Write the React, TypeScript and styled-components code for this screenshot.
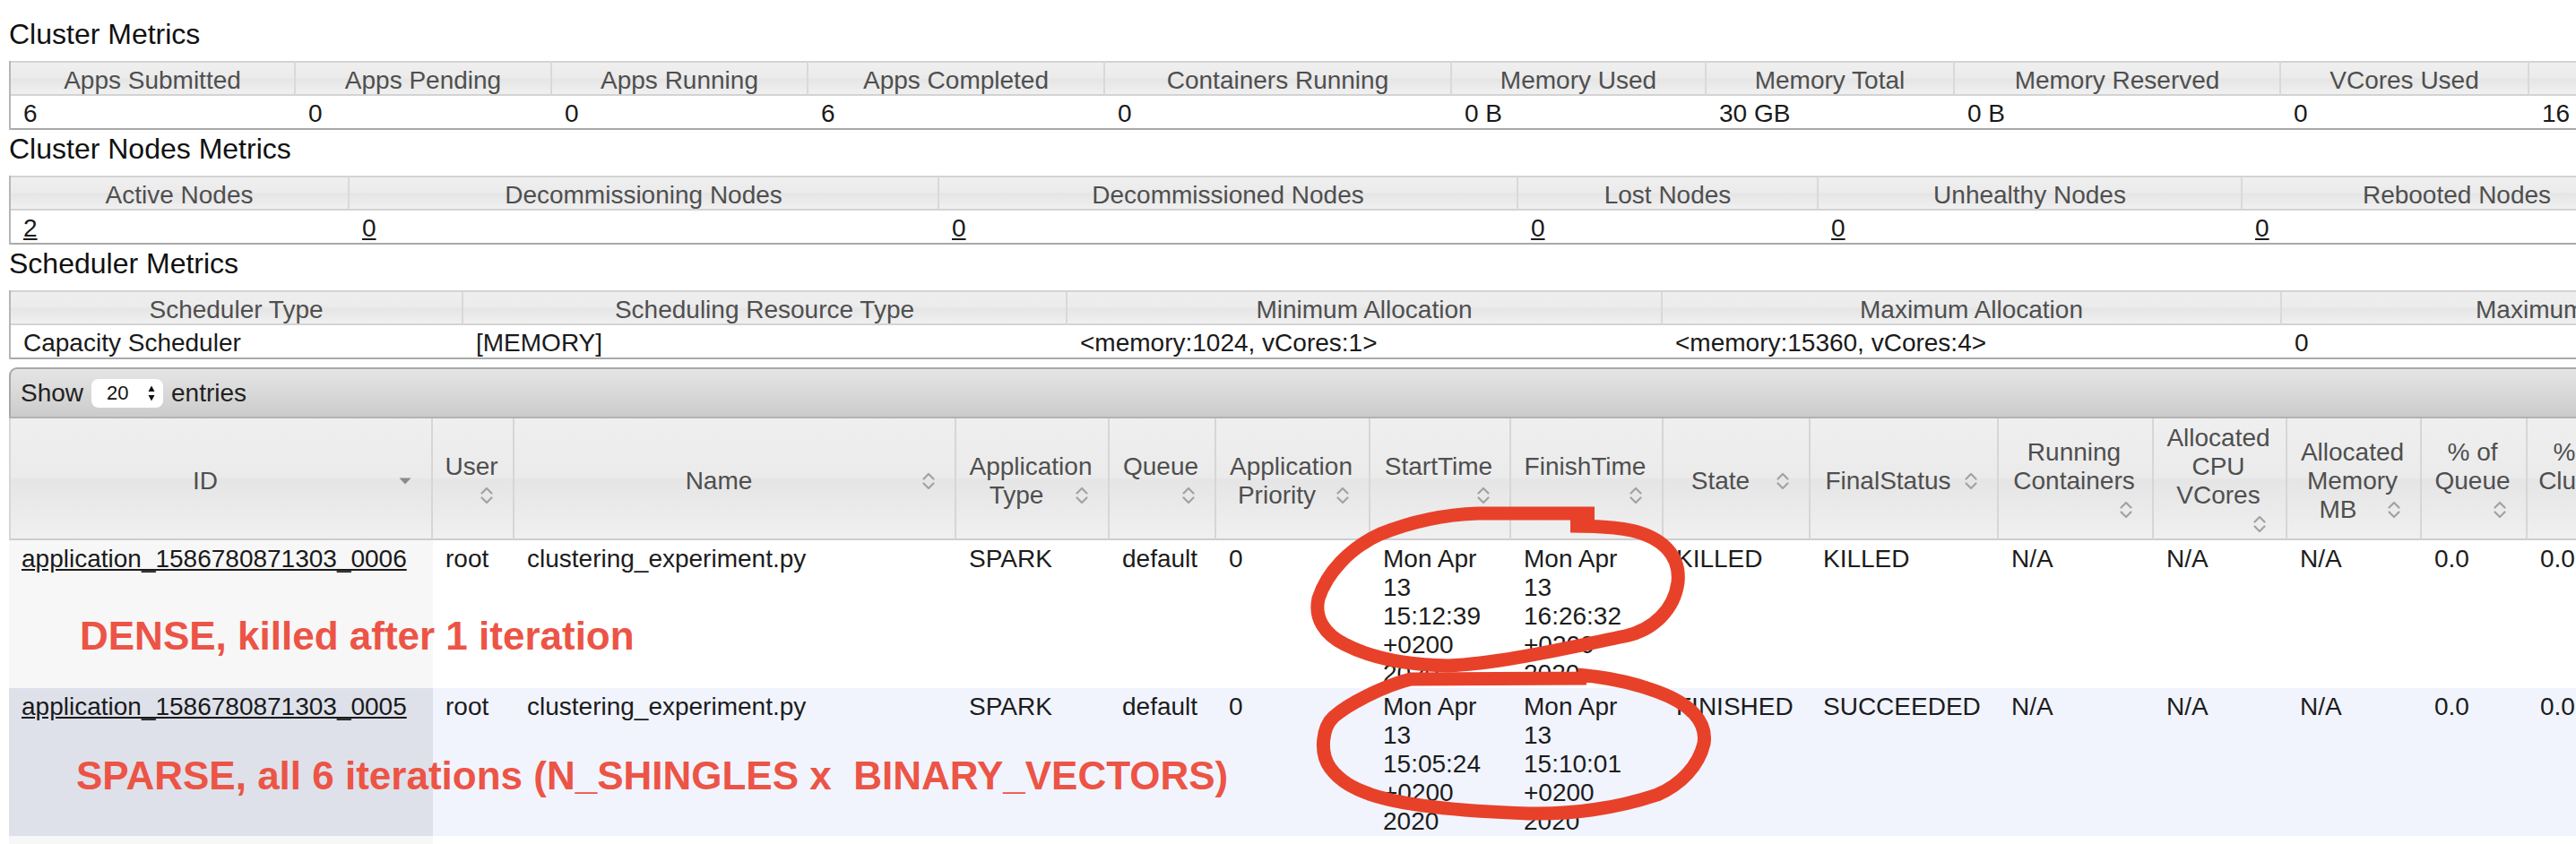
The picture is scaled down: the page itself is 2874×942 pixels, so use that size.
import React from "react";
import styled, { createGlobalStyle } from "styled-components";

const GlobalStyle = createGlobalStyle`
  html, body { margin: 0; padding: 0; background: #ffffff; overflow: hidden; }
  body { font-family: "Liberation Sans", Arial, Helvetica, sans-serif; color: #1e1e1e; }
`;

const Page = styled.div`
  position: relative;
  width: max-content;
  padding: 19px 0 0 10px;
`;

const SectionTitle = styled.h3`
  margin: 0 0 11px;
  font-size: 32px;
  line-height: 38px;
  font-weight: normal;
  color: #111111;
`;

const MetricsTable = styled.table<{ $w: number }>`
  width: ${(p) => p.$w}px;
  table-layout: fixed;
  border-collapse: separate;
  border-spacing: 0;
  border-left: 2px solid #b6b6b6;
  margin-bottom: 2px;
  font-size: 28px;
`;

const Col = styled.col<{ $w: number }>`
  width: ${(p) => p.$w}px;
`;

const headBg = `linear-gradient(to bottom, #efefef 0%, #ebebeb 49%, #e5e5e5 51%, #f0f0f0 100%)`;

const MetricTh = styled.th`
  padding: 5px 6px 0;
  line-height: 30px;
  font-weight: normal;
  color: #4f4f4f;
  text-align: center;
  white-space: nowrap;
  overflow: hidden;
  background: ${headBg};
  border-top: 2px solid #d3d3d3;
  border-bottom: 2px solid #d3d3d3;
  border-right: 2px solid #d9d9d9;
`;

const MetricTd = styled.td`
  padding: 4px 0 0 14px;
  line-height: 32px;
  white-space: nowrap;
  overflow: hidden;
  color: #1a1a1a;
  border-bottom: 2px solid #a9a9a9;
`;

const Link = styled.a`
  color: #1a1a1a;
  text-decoration: underline;
`;

const DataWrap = styled.div`
  margin-top: 9px;
  width: max-content;
`;

const Toolbar = styled.div`
  display: flex;
  align-items: center;
  gap: 9px;
  height: 53px;
  padding-left: 11px;
  border-top: 2px solid #a8a8a8;
  border-left: 2px solid #a8a8a8;
  border-bottom: 2px solid #b3b3b3;
  border-top-left-radius: 9px;
  background: linear-gradient(to bottom, #e5e5e5 0%, #d6d6d6 60%, #cbcbcb 100%);
  font-size: 28px;
  line-height: 32px;
  color: #222222;
`;

const FakeSelect = styled.span`
  display: flex;
  align-items: center;
  justify-content: space-between;
  box-sizing: border-box;
  width: 80px;
  height: 32px;
  padding: 0 9px 0 17px;
  background: #ffffff;
  border-radius: 8px;
  font-size: 22px;
  color: #111;
`;

const DataTable = styled.table<{ $w: number }>`
  width: ${(p) => p.$w}px;
  table-layout: fixed;
  border-collapse: separate;
  border-spacing: 0;
  font-size: 28px;
`;

const DTh = styled.th<{ $first?: boolean }>`
  padding: 6px 13px 0 10px;
  line-height: 32px;
  font-weight: normal;
  color: #4f4f4f;
  text-align: center;
  vertical-align: middle;
  background: ${headBg};
  border-bottom: 2px solid #cdcdcd;
  border-right: 2px solid #d6d6d6;
  border-left: ${(p) => (p.$first ? "2px solid #d6d6d6" : "none")};
  overflow: hidden;
`;

const IconBox = styled.span`
  float: right;
  width: 32px;
  height: 32px;
  display: flex;
  align-items: center;
  justify-content: center;
`;

const Row = styled.tr<{ $alt: boolean }>`
  background: ${(p) => (p.$alt ? "#f1f4fd" : "#ffffff")};
`;

const DTd = styled.td<{ $sorted?: boolean; $alt?: boolean }>`
  padding: 5px 16px 0 14px;
  line-height: 32px;
  vertical-align: top;
  color: #1c1c1c;
  white-space: nowrap;
  overflow: hidden;
  background: ${(p) => (p.$sorted ? (p.$alt ? "#dee1ea" : "#f7f7f7") : "transparent")};
`;

const Overlay = styled.svg`
  position: absolute;
  top: 0;
  left: 0;
  pointer-events: none;
`;

const Annotation = styled.div<{ $top: number; $left: number }>`
  position: absolute;
  top: ${(p) => p.$top}px;
  left: ${(p) => p.$left}px;
  font-size: 44px;
  line-height: 44px;
  font-weight: bold;
  color: #ec5446;
  white-space: pre;
`;

type Cell = string | { link: string };

const clusterMetrics = {
  cols: [318, 286, 286, 331, 387, 284, 277, 364, 277, 277, 364],
  heads: [
    "Apps Submitted",
    "Apps Pending",
    "Apps Running",
    "Apps Completed",
    "Containers Running",
    "Memory Used",
    "Memory Total",
    "Memory Reserved",
    "VCores Used",
    "VCores Total",
    "VCores Reserved",
  ],
  values: ["6", "0", "0", "6", "0", "0 B", "30 GB", "0 B", "0", "16", "0"] as Cell[],
};

const nodeMetrics = {
  cols: [378, 658, 646, 335, 473, 480, 480],
  heads: [
    "Active Nodes",
    "Decommissioning Nodes",
    "Decommissioned Nodes",
    "Lost Nodes",
    "Unhealthy Nodes",
    "Rebooted Nodes",
    "Shutdown Nodes",
  ],
  values: ["2", "0", "0", "0", "0", "0", "0"].map((v) => ({ link: v })) as Cell[],
};

const schedulerMetrics = {
  cols: [505, 674, 664, 691, 890],
  heads: [
    "Scheduler Type",
    "Scheduling Resource Type",
    "Minimum Allocation",
    "Maximum Allocation",
    "Maximum Cluster Application Priority",
  ],
  values: [
    "Capacity Scheduler",
    "[MEMORY]",
    "<memory:1024, vCores:1>",
    "<memory:15360, vCores:4>",
    "0",
  ] as Cell[],
};

type HeadDef = { lines: string[]; w: number; own?: boolean; desc?: boolean };

const appHeads: HeadDef[] = [
  { lines: ["ID"], w: 473, desc: true },
  { lines: ["User"], w: 91, own: true },
  { lines: ["Name"], w: 493 },
  { lines: ["Application", "Type"], w: 171 },
  { lines: ["Queue"], w: 119, own: true },
  { lines: ["Application", "Priority"], w: 172 },
  { lines: ["StartTime"], w: 157, own: true },
  { lines: ["FinishTime"], w: 170, own: true },
  { lines: ["State"], w: 164 },
  { lines: ["FinalStatus"], w: 210 },
  { lines: ["Running", "Containers"], w: 173, own: true },
  { lines: ["Allocated", "CPU", "VCores"], w: 149, own: true },
  { lines: ["Allocated", "Memory", "MB"], w: 150 },
  { lines: ["% of", "Queue"], w: 118, own: true },
  { lines: ["% of", "Cluster"], w: 118, own: true },
  { lines: ["Progress"], w: 200 },
  { lines: ["Tracking UI"], w: 200 },
];

type App = {
  id: string;
  start: string;
  finish: string;
  state: string;
  final: string;
};

const apps: App[] = [
  {
    id: "application_1586780871303_0006",
    start: "Mon Apr|13|15:12:39|+0200|2020",
    finish: "Mon Apr|13|16:26:32|+0200|2020",
    state: "KILLED",
    final: "KILLED",
  },
  {
    id: "application_1586780871303_0005",
    start: "Mon Apr|13|15:05:24|+0200|2020",
    finish: "Mon Apr|13|15:10:01|+0200|2020",
    state: "FINISHED",
    final: "SUCCEEDED",
  },
  {
    id: "application_1586780871303_0004",
    start: "Mon Apr|13|14:52:10|+0200|2020",
    finish: "Mon Apr|13|15:01:47|+0200|2020",
    state: "FINISHED",
    final: "SUCCEEDED",
  },
];

const sum = (a: number[]) => a.reduce((s, v) => s + v, 0);

function Metrics({ data }: { data: { cols: number[]; heads: string[]; values: Cell[] } }) {
  return (
    <MetricsTable $w={sum(data.cols) + 2}>
      <colgroup>
        {data.cols.map((w, i) => (
          <Col key={i} $w={w} />
        ))}
      </colgroup>
      <thead>
        <tr>
          {data.heads.map((h) => (
            <MetricTh key={h}>{h}</MetricTh>
          ))}
        </tr>
      </thead>
      <tbody>
        <tr>
          {data.values.map((v, i) => (
            <MetricTd key={i}>{typeof v === "string" ? v : <Link href="#">{v.link}</Link>}</MetricTd>
          ))}
        </tr>
      </tbody>
    </MetricsTable>
  );
}

function SortGlyph({ desc }: { desc?: boolean }) {
  if (desc) {
    return (
      <svg width="14" height="8" viewBox="0 0 14 8">
        <path d="M0.5 0.5 H13.5 L7 7.5 Z" fill="#8a8a8a" />
      </svg>
    );
  }
  return (
    <svg width="16" height="20" viewBox="0 0 16 20" fill="none" stroke="#a2a2a2" strokeWidth="2.2" strokeLinecap="round" strokeLinejoin="round">
      <path d="M2.5 7.5 L8 2 L13.5 7.5" />
      <path d="M2.5 12.5 L8 18 L13.5 12.5" />
    </svg>
  );
}

function Lines({ text }: { text: string }) {
  const parts = text.split("|");
  return (
    <>
      {parts.map((p, i) => (
        <React.Fragment key={i}>
          {i > 0 && <br />}
          {p}
        </React.Fragment>
      ))}
    </>
  );
}

function AppsTable() {
  const widths = appHeads.map((h) => h.w);
  return (
    <DataWrap>
      <Toolbar>
        <span>Show</span>
        <FakeSelect>
          <span>20</span>
          <svg width="8" height="20" viewBox="0 0 8 20">
            <path d="M0.5 8 L4 1.5 L7.5 8 Z" fill="#111" />
            <path d="M0.5 12 L4 18.5 L7.5 12 Z" fill="#111" />
          </svg>
        </FakeSelect>
        <span>entries</span>
      </Toolbar>
      <DataTable $w={sum(widths)}>
        <colgroup>
          {widths.map((w, i) => (
            <Col key={i} $w={w} />
          ))}
        </colgroup>
        <thead>
          <tr>
            {appHeads.map((h, i) => (
              <DTh key={i} $first={i === 0}>
                {h.lines.map((l, j) => (
                  <React.Fragment key={j}>
                    {j > 0 && <br />}
                    {l}
                  </React.Fragment>
                ))}
                {h.own && <br />}
                <IconBox>
                  <SortGlyph desc={h.desc} />
                </IconBox>
              </DTh>
            ))}
          </tr>
        </thead>
        <tbody>
          {apps.map((a, i) => {
            const alt = i % 2 === 1;
            return (
              <Row key={a.id} $alt={alt}>
                <DTd $sorted $alt={alt}>
                  <Link href="#">{a.id}</Link>
                </DTd>
                <DTd>root</DTd>
                <DTd>clustering_experiment.py</DTd>
                <DTd>SPARK</DTd>
                <DTd>default</DTd>
                <DTd>0</DTd>
                <DTd>
                  <Lines text={a.start} />
                </DTd>
                <DTd>
                  <Lines text={a.finish} />
                </DTd>
                <DTd>{a.state}</DTd>
                <DTd>{a.final}</DTd>
                <DTd>N/A</DTd>
                <DTd>N/A</DTd>
                <DTd>N/A</DTd>
                <DTd>0.0</DTd>
                <DTd>0.0</DTd>
                <DTd>100%</DTd>
                <DTd>History</DTd>
              </Row>
            );
          })}
        </tbody>
      </DataTable>
    </DataWrap>
  );
}

export default function App() {
  return (
    <>
      <GlobalStyle />
      <Page>
        <SectionTitle>Cluster Metrics</SectionTitle>
        <Metrics data={clusterMetrics} />
        <SectionTitle>Cluster Nodes Metrics</SectionTitle>
        <Metrics data={nodeMetrics} />
        <SectionTitle>Scheduler Metrics</SectionTitle>
        <Metrics data={schedulerMetrics} />
        <AppsTable />

        <Overlay width="2874" height="942" viewBox="0 0 2874 942">
          <g fill="none" stroke="#e8412a" strokeWidth="15" strokeLinejoin="round" strokeLinecap="butt">
            <path d="M1779 573 L1649 573 C1620 574 1580 580 1540 596 C1505 612 1480 640 1471 668 C1466 690 1478 708 1500 719 C1525 732 1560 742 1616 743 C1670 741 1740 725 1813 710 C1845 703 1868 680 1872 650 C1875 620 1855 600 1820 592 C1800 588 1780 587 1752 587" />
            <path d="M1770 757 L1574 758 C1545 765 1505 785 1488 800 C1475 812 1472 840 1484 857 C1495 872 1510 880 1530 887 C1560 897 1620 905 1706 908 C1760 909 1810 900 1849 887 C1875 876 1895 855 1901 830 C1905 805 1885 785 1849 772 C1825 763 1795 756 1760 753" />
          </g>
        </Overlay>
        <Annotation $top={688} $left={89}>DENSE, killed after 1 iteration</Annotation>
        <Annotation $top={844} $left={85}>{"SPARSE, all 6 iterations (N_SHINGLES x  BINARY_VECTORS)"}</Annotation>
      </Page>
    </>
  );
}
